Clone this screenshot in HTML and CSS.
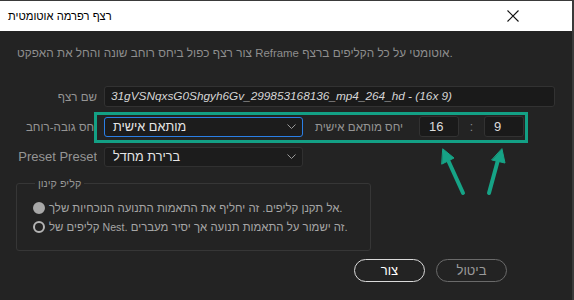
FILE: index.html
```html
<!DOCTYPE html>
<html lang="he">
<head>
  <meta charset="UTF-8">
  <title>רצף רפרמה אוטומטית</title>
  <link rel="stylesheet" href="styles.css">
</head>
<body>
  <div class="dialog">
    <div class="titlebar">
      <span class="title">רצף רפרמה אוטומטית</span>
      <span class="close">
        <svg width="12" height="12" viewBox="0 0 12 12"><path d="M0.5 0.5 L11.5 11.5 M11.5 0.5 L0.5 11.5" stroke="#111" stroke-width="1.1" fill="none"/></svg>
      </span>
    </div>

    <div class="content">
      <p class="desc">צור רצף כפול ביחס רוחב שונה והחל את האפקט <span class="latin">Reframe</span> אוטומטי על כל הקליפים ברצף.</p>

      <div class="form">
        <div class="row">
          <label class="label">שם רצף</label>
          <div class="field name">31gVSNqxsG0Shgyh6Gv_299853168136_mp4_264_hd - (16x 9)</div>
        </div>
        <div class="row">
          <label class="label">יחס גובה-רוחב</label>
          <div class="select focused">
            <span>מותאם אישית</span>
            <svg class="chev" width="9" height="5" viewBox="0 0 9 5"><path d="M0.5 0.5 L4.5 4.5 L8.5 0.5" stroke="#9a9a9a" fill="none"/></svg>
          </div>
          <span class="sublabel">יחס מותאם אישית</span>
          <div class="field num">16</div>
          <span class="colon">:</span>
          <div class="field num">9</div>
        </div>
        <div class="row">
          <label class="label latin">Preset Preset</label>
          <div class="select">
            <span>ברירת מחדל</span>
            <svg class="chev" width="9" height="5" viewBox="0 0 9 5"><path d="M0.5 0.5 L4.5 4.5 L8.5 0.5" stroke="#9a9a9a" fill="none"/></svg>
          </div>
        </div>
      </div>

      <fieldset class="group">
        <legend>קליפ קינון</legend>
        <div class="radio">
          <span class="dot checked"></span>
          <span>אל תקנן קליפים. זה יחליף את התאמות התנועה הנוכחיות שלך.</span>
        </div>
        <div class="radio">
          <span class="dot"></span>
          <span>קליפים של <span class="latin">Nest</span>. זה ישמור על התאמות תנועה אך יסיר מעברים.</span>
        </div>
      </fieldset>

      <div class="actions">
        <button class="btn primary">צור</button>
        <button class="btn">ביטול</button>
      </div>
    </div>

    <div class="highlight"></div>
    <svg class="arrows" width="574" height="300" viewBox="0 0 574 300">
      <g stroke="#16a386" stroke-width="4" stroke-linecap="round" fill="#16a386">
        <line x1="463" y1="193" x2="448" y2="160"/>
        <polygon points="443,149 454,158 442,164" stroke-width="1" stroke-linejoin="round"/>
        <line x1="489" y1="193" x2="498" y2="160"/>
        <polygon points="502,149 505,163 492,160" stroke-width="1" stroke-linejoin="round"/>
      </g>
    </svg>
  </div>
</body>
</html>
```

FILE: styles.css
```css
body {
  margin: 0;
  background: #3a3a3a;
  font-family: 'Liberation Sans', 'DejaVu Sans', sans-serif;
  font-size: 12px;
}

.dialog {
  position: relative;
  width: 572px;
  height: 299px;
  margin-top: 1px;
  background: #232323;
  overflow: hidden;
}

.titlebar {
  height: 30px;
  background: #ffffff;
  display: flex;
  align-items: center;
  justify-content: space-between;
  padding: 0 53px 0 8px;
}

.title {
  color: #000;
  font-size: 11.2px;
}

.close {
  display: flex;
}

.content {
  padding: 0 17px;
}

.desc {
  margin: 15px 0 0;
  line-height: 14px;
  font-size: 11.8px;
  color: #8e8e8e;
  white-space: nowrap;
}

.desc .latin {
  font-size: 11.4px;
}

.form {
  margin-top: 26px;
  display: flex;
  flex-direction: column;
  gap: 9px;
}

.row {
  display: flex;
  align-items: center;
  height: 21px;
}

.label {
  width: 80px;
  flex: none;
  margin-right: 7px;
  direction: rtl;
  text-align: right;
  white-space: nowrap;
  overflow: hidden;
  color: #959595;
  font-size: 11.6px;
}

.label.latin {
  font-size: 13px;
}

.field {
  height: 21px;
  box-sizing: border-box;
  background: #1a1a1a;
  border: 1px solid #323232;
  border-radius: 3px;
  color: #d6d6d6;
  padding-left: 6px;
  line-height: 19px;
  white-space: nowrap;
  overflow: hidden;
}

.field.name {
  width: 451px;
  font-style: italic;
  font-size: 11.8px;
}

.field.num {
  width: 40px;
  padding-left: 9px;
  color: #dcdcdc;
  font-size: 13px;
}

.select {
  width: 199px;
  height: 20px;
  box-sizing: border-box;
  display: flex;
  align-items: center;
  justify-content: space-between;
  padding: 0 6px 0 8px;
  background: #1c1c1c;
  border: 1px solid #303030;
  border-radius: 3px;
  color: #e6e6e6;
  font-size: 12.7px;
}

.select.focused {
  border-color: #2b7fe6;
}

.sublabel {
  width: 116px;
  flex: none;
  padding-left: 12px;
  box-sizing: border-box;
  color: #959595;
  font-size: 11.6px;
  white-space: nowrap;
}

.colon {
  width: 25px;
  text-align: center;
  color: #8a8a8a;
}

.group {
  margin: 9px 0 0 -1px;
  width: 355px;
  min-width: 0;
  box-sizing: border-box;
  padding: 8px 0 14px 16px;
  border: 1px solid #363636;
  border-radius: 3px;
}

.group legend {
  padding: 0 3px;
  margin-left: 2px;
  color: #959595;
  font-size: 10.8px;
  line-height: 14px;
}

.radio {
  display: flex;
  align-items: center;
  gap: 4px;
  height: 19px;
  font-size: 11.4px;
  color: #a6a6a6;
  white-space: nowrap;
}

.radio .latin {
  font-size: 10.6px;
}

.dot {
  width: 12px;
  height: 12px;
  box-sizing: border-box;
  border-radius: 50%;
  border: 2px solid #b4b4b4;
  flex: none;
}

.dot.checked {
  background: #a8a8a8;
  border-color: #a8a8a8;
}

.actions {
  margin-top: 8px;
  display: flex;
  justify-content: flex-end;
  gap: 11px;
  padding-right: 48px;
}

.btn {
  width: 71px;
  height: 23px;
  border-radius: 12px;
  border: 1.5px solid #6a6a6a;
  background: transparent;
  color: #9a9a9a;
  font-family: inherit;
  font-size: 13px;
  padding: 0;
}

.btn.primary {
  border-color: #dadada;
  color: #ffffff;
}

.highlight {
  position: absolute;
  left: 94px;
  top: 111px;
  width: 434px;
  height: 31px;
  box-sizing: border-box;
  border: 3px solid #13a085;
}

.arrows {
  position: absolute;
  left: 0;
  top: -1px;
  pointer-events: none;
}
```
